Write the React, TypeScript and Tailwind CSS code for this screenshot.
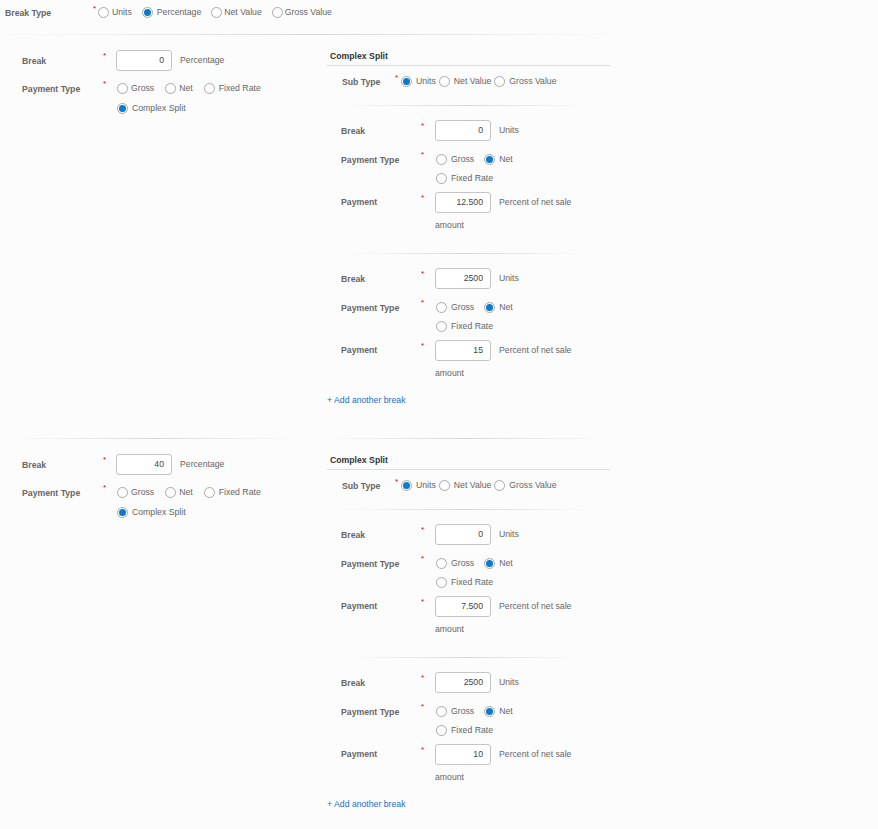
import React from 'react'

type Opt = { label: string; checked?: boolean }

function Radio({ label, checked, gap = 'gap-[3px]' }: Opt & { gap?: string }) {
  return (
    <label className={`flex items-center ${gap} leading-[12px] text-[#666]`}>
      <span className="flex h-[11px] w-[11px] items-center justify-center rounded-full border border-[#a8a8a8] bg-white">
        {checked && <span className="h-[7px] w-[7px] rounded-full bg-[#0a7bc9]" />}
      </span>
      <span>{label}</span>
    </label>
  )
}

function Req({ className = '' }: { className?: string }) {
  return <span className={`self-start text-[8px] leading-[8px] text-[#e00000] ${className}`}>*</span>
}

function NumBox({ value }: { value: string }) {
  return (
    <div className="flex h-[21px] w-[56px] items-center justify-end rounded-[3px] border border-[#c4c4c4] bg-white pr-[7px] text-[#444]">
      {value}
    </div>
  )
}

function Fade({ className = '' }: { className?: string }) {
  return <div className={`h-px bg-linear-to-r from-transparent via-[#d6d6d6] to-transparent ${className}`} />
}

const label = 'font-bold text-[#666] leading-[12px]'

type SubBreak = { value: string; payment: string }

function SubBreakItem({ item, first }: { item: SubBreak; first: boolean }) {
  return (
    <div>
      <Fade className={first ? 'ml-[13px] w-[250px]' : 'ml-[23px] w-[230px]'} />
      <div className="pl-[14px]">
        <div className="mt-[14px] flex items-center">
          <span className={`${label} w-[80px]`}>Break</span>
          <Req className="mt-[2px] w-[14px]" />
          <NumBox value={item.value} />
          <span className="ml-[8px] text-[#666]">Units</span>
        </div>
        <div className="mt-[12px] flex items-start">
          <span className={`${label} w-[80px] pt-px`}>Payment Type</span>
          <Req className="mt-[-2px] w-[14px]" />
          <div className="flex w-[120px] flex-wrap gap-x-[10px] gap-y-[7px] pl-px">
            <Radio label="Gross" gap="gap-[4px]" />
            <Radio label="Net" checked gap="gap-[4px]" />
            <Radio label="Fixed Rate" gap="gap-[4px]" />
          </div>
        </div>
        <div className="mt-[8px] flex items-start">
          <span className={`${label} w-[80px] pt-[4px]`}>Payment</span>
          <Req className="mt-[2px] w-[14px]" />
          <div>
            <div className="flex items-center">
              <NumBox value={item.payment} />
              <span className="ml-[8px] text-[#666]">Percent of net sale</span>
            </div>
            <div className="mt-[6px] leading-[12px] text-[#666]">amount</div>
          </div>
        </div>
      </div>
      <div className="h-[22px]" />
    </div>
  )
}

function Section({ breakValue, items }: { breakValue: string; items: SubBreak[] }) {
  return (
    <div className="flex">
      <div className="w-[327px] pl-[22px] pt-[15px]">
        <div className="flex items-center">
          <span className={`${label} w-[81px]`}>Break</span>
          <Req className="mt-[2px] w-[13px]" />
          <NumBox value={breakValue} />
          <span className="ml-[8px] text-[#666]">Percentage</span>
        </div>
        <div className="mt-[11px] flex items-start">
          <span className={`${label} w-[81px] pt-px`}>Payment Type</span>
          <Req className="mt-[-2px] w-[13px]" />
          <div className="flex w-[160px] flex-wrap gap-x-[11px] gap-y-[8px] pl-px">
            <Radio label="Gross" gap="gap-[3px]" />
            <Radio label="Net" gap="gap-[3px]" />
            <Radio label="Fixed Rate" gap="gap-[4px]" />
            <Radio label="Complex Split" checked gap="gap-[4px]" />
          </div>
        </div>
      </div>
      <div className="w-[283px] pt-[15px]">
        <div className="border-b border-[#dcdcdc] pb-[3px] pl-[3px] font-bold leading-[12px] text-[#333]">Complex Split</div>
        <div className="mt-[9px] flex items-center pl-[15px]">
          <span className={`${label} w-[53px] translate-y-[1px]`}>Sub Type</span>
          <Req className="mt-[-1px] w-[6px]" />
          <div className="flex gap-[3px]">
            <Radio label="Units" checked gap="gap-[4px]" />
            <Radio label="Net Value" gap="gap-[4px]" />
            <Radio label="Gross Value" gap="gap-[4px]" />
          </div>
        </div>
        <div className="h-[18px]" />
        {items.map((it, i) => (
          <SubBreakItem key={i} item={it} first={i === 0} />
        ))}
        <a className="-mt-[7px] block leading-[12px] text-[#1a6fc2]">+ Add another break</a>
      </div>
    </div>
  )
}

export default function App() {
  return (
    <div className="h-[829px] w-[878px] overflow-hidden bg-[#fcfcfc] font-['Liberation_Sans',Arial,sans-serif] text-[8.7px]">
      <div className="flex items-center pl-[5px] pt-[6px]">
        <span className={`${label} w-[88px] translate-y-[1px]`}>Break Type</span>
        <Req className="mt-[-1px] w-[5px]" />
        <div className="flex gap-[10px]">
          <Radio label="Units" />
          <Radio label="Percentage" checked gap="gap-[4px]" />
          <Radio label="Net Value" gap="gap-[2px]" />
          <Radio label="Gross Value" gap="gap-[2px]" />
        </div>
      </div>
      <Fade className="mt-[16px] w-[620px] from-[#e8e8e8] via-[#cfcfcf]" />
      <Section
        breakValue="0"
        items={[
          { value: '0', payment: '12.500' },
          { value: '2500', payment: '15' },
        ]}
      />
      <div className="mt-[32px] flex">
        <Fade className="ml-[10px] w-[290px]" />
        <Fade className="ml-[20px] w-[290px]" />
      </div>
      <Section
        breakValue="40"
        items={[
          { value: '0', payment: '7.500' },
          { value: '2500', payment: '10' },
        ]}
      />
    </div>
  )
}
